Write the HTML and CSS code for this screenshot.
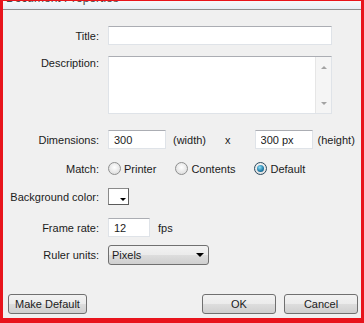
FILE: index.html
```html
<!DOCTYPE html>
<html lang="en">

<head>
    <meta charset="UTF-8">
    <title>Document Properties</title>
    <link rel="stylesheet" href="styles.css">
</head>

<body>
    <div class="dialog">
        <div class="titlebar"><span class="title">Document Properties</span></div>

        <div class="content">
            <div class="row">
                <label class="label">Title:</label>
                <input class="field field-wide" type="text">
            </div>

            <div class="row row-desc">
                <label class="label">Description:</label>
                <div class="textarea">
                    <div class="scrollbar">
                        <span class="arrow-up"></span>
                        <span class="arrow-down"></span>
                    </div>
                </div>
            </div>

            <div class="row row-dims">
                <label class="label">Dimensions:</label>
                <input class="field field-num" type="text" value="300">
                <span class="unit-width">(width)</span>
                <span class="times">x</span>
                <input class="field field-num" type="text" value="300 px">
                <span class="unit-height">(height)</span>
            </div>

            <div class="row row-match">
                <label class="label">Match:</label>
                <span class="option"><span class="radio"></span>Printer</span>
                <span class="option"><span class="radio"></span>Contents</span>
                <span class="option"><span class="radio checked"></span>Default</span>
            </div>

            <div class="row row-bg">
                <label class="label">Background color:</label>
                <span class="swatch"><span class="swatch-arrow"></span></span>
            </div>

            <div class="row row-fps">
                <label class="label">Frame rate:</label>
                <input class="field field-fps" type="text" value="12">
                <span class="fps">fps</span>
            </div>

            <div class="row row-ruler">
                <label class="label">Ruler units:</label>
                <div class="select">
                    <span>Pixels</span>
                    <span class="select-arrow"></span>
                </div>
            </div>
        </div>

        <div class="footer">
            <button class="btn btn-default">Make Default</button>
            <button class="btn btn-ok">OK</button>
            <button class="btn">Cancel</button>
        </div>
    </div>
</body>

</html>
```

FILE: styles.css
```css
body {
    margin: 0;
    padding: 0;
    background: #f0f0f0;
}

.dialog {
    width: 364px;
    height: 323px;
    box-sizing: border-box;
    border: 3px solid #e8141c;
    border-top-width: 1px;
    border-bottom-width: 5px;
    background: #f0f0f0;
    display: flex;
    flex-direction: column;
    font-family: 'Liberation Sans', Arial, sans-serif;
    font-size: 11px;
    color: #1b1b1b;
}

.titlebar {
    height: 8px;
    overflow: hidden;
    background: linear-gradient(#f6f8fb, #e7edf4);
    border-bottom: 1px solid #8f8f8f;
}

.title {
    display: block;
    margin-top: -9px;
    margin-left: 3px;
    font-size: 12px;
    line-height: 12px;
    color: #4a4a4a;
}

.content {
    flex: 1;
    padding-top: 16px;
}

.row {
    display: flex;
    align-items: center;
    height: 19px;
}

.label {
    width: 96px;
    flex-shrink: 0;
    margin-right: 9px;
    text-align: right;
}

.field {
    height: 19px;
    box-sizing: border-box;
    margin: 0;
    padding: 0 5px;
    border: 1px solid #dfe3e8;
    border-top-color: #abadb3;
    background: #fff;
    font-family: inherit;
    font-size: 11px;
    color: inherit;
    outline: none;
}

.field-wide {
    width: 224px;
}

.field-num {
    width: 58px;
}

.field-fps {
    width: 42px;
}

.row-desc {
    margin-top: 11px;
    height: 58px;
    align-items: flex-start;
}

.row-desc .label {
    padding-top: 1px;
}

.textarea {
    width: 224px;
    height: 58px;
    box-sizing: border-box;
    border: 1px solid #dfe3e8;
    border-top-color: #abadb3;
    background: #fff;
    display: flex;
    justify-content: flex-end;
}

.scrollbar {
    width: 16px;
    box-sizing: border-box;
    padding: 9px 0 8px;
    background: #f5f5f5;
    border-left: 1px solid #e6e6e6;
    display: flex;
    flex-direction: column;
    justify-content: space-between;
    align-items: center;
}

.arrow-up,
.arrow-down {
    width: 0;
    height: 0;
    border-left: 3px solid transparent;
    border-right: 3px solid transparent;
}

.arrow-up {
    border-bottom: 3px solid #a3a3a3;
}

.arrow-down {
    border-top: 3px solid #a3a3a3;
}

.row-dims {
    margin-top: 16px;
}

.unit-width {
    margin-left: 7px;
}

.times {
    margin-left: 19px;
    margin-right: 24px;
}

.unit-height {
    margin-left: 5px;
}

.row-match {
    margin-top: 10px;
}

.option {
    display: flex;
    align-items: center;
    gap: 3px;
    margin-right: 19px;
}

.radio {
    width: 13px;
    height: 13px;
    box-sizing: border-box;
    border-radius: 50%;
    border: 1px solid #8e8f8f;
    background: radial-gradient(circle at 50% 40%, #ffffff, #d6d6d6);
    display: flex;
    align-items: center;
    justify-content: center;
}

.radio.checked {
    border-color: #2c4a5e;
}

.radio.checked::after {
    content: '';
    width: 7px;
    height: 7px;
    border-radius: 50%;
    background: radial-gradient(circle at 40% 35%, #8ee0f8, #1d7aa8 60%, #124b6b);
}

.row-bg {
    margin-top: 9px;
}

.swatch {
    width: 21px;
    height: 17px;
    box-sizing: border-box;
    border: 1px solid #8a8a8a;
    border-right-color: #5a5a5a;
    border-bottom-color: #5a5a5a;
    background: #fff;
    display: flex;
    align-items: flex-end;
    justify-content: flex-end;
    padding: 0 2px 3px 0;
}

.swatch-arrow {
    width: 0;
    height: 0;
    border-left: 3px solid transparent;
    border-right: 3px solid transparent;
    border-top: 3px solid #000;
}

.row-fps {
    margin-top: 12px;
}

.fps {
    margin-left: 8px;
}

.row-ruler {
    margin-top: 8px;
    height: 20px;
}

.select {
    width: 101px;
    height: 20px;
    box-sizing: border-box;
    border: 1px solid #707070;
    border-radius: 3px;
    background: linear-gradient(#f2f2f2 0%, #ebebeb 50%, #dddddd 51%, #cfcfcf 100%);
    display: flex;
    align-items: center;
    justify-content: space-between;
    padding: 0 4px 0 3px;
}

.select-arrow {
    width: 0;
    height: 0;
    border-left: 4px solid transparent;
    border-right: 4px solid transparent;
    border-top: 4px solid #000;
}

.footer {
    display: flex;
    align-items: center;
    padding: 0 3px 4px 5px;
}

.btn {
    height: 20px;
    width: 74px;
    margin: 0;
    padding: 0;
    box-sizing: border-box;
    border: 1px solid #707070;
    border-radius: 3px;
    background: linear-gradient(#f2f2f2 0%, #ebebeb 50%, #dddddd 51%, #cfcfcf 100%);
    font-family: 'Liberation Sans', Arial, sans-serif;
    font-size: 11px;
    color: #1b1b1b;
}

.btn-default {
    width: 79px;
}

.btn-ok {
    margin-left: auto;
    margin-right: 8px;
}
```
